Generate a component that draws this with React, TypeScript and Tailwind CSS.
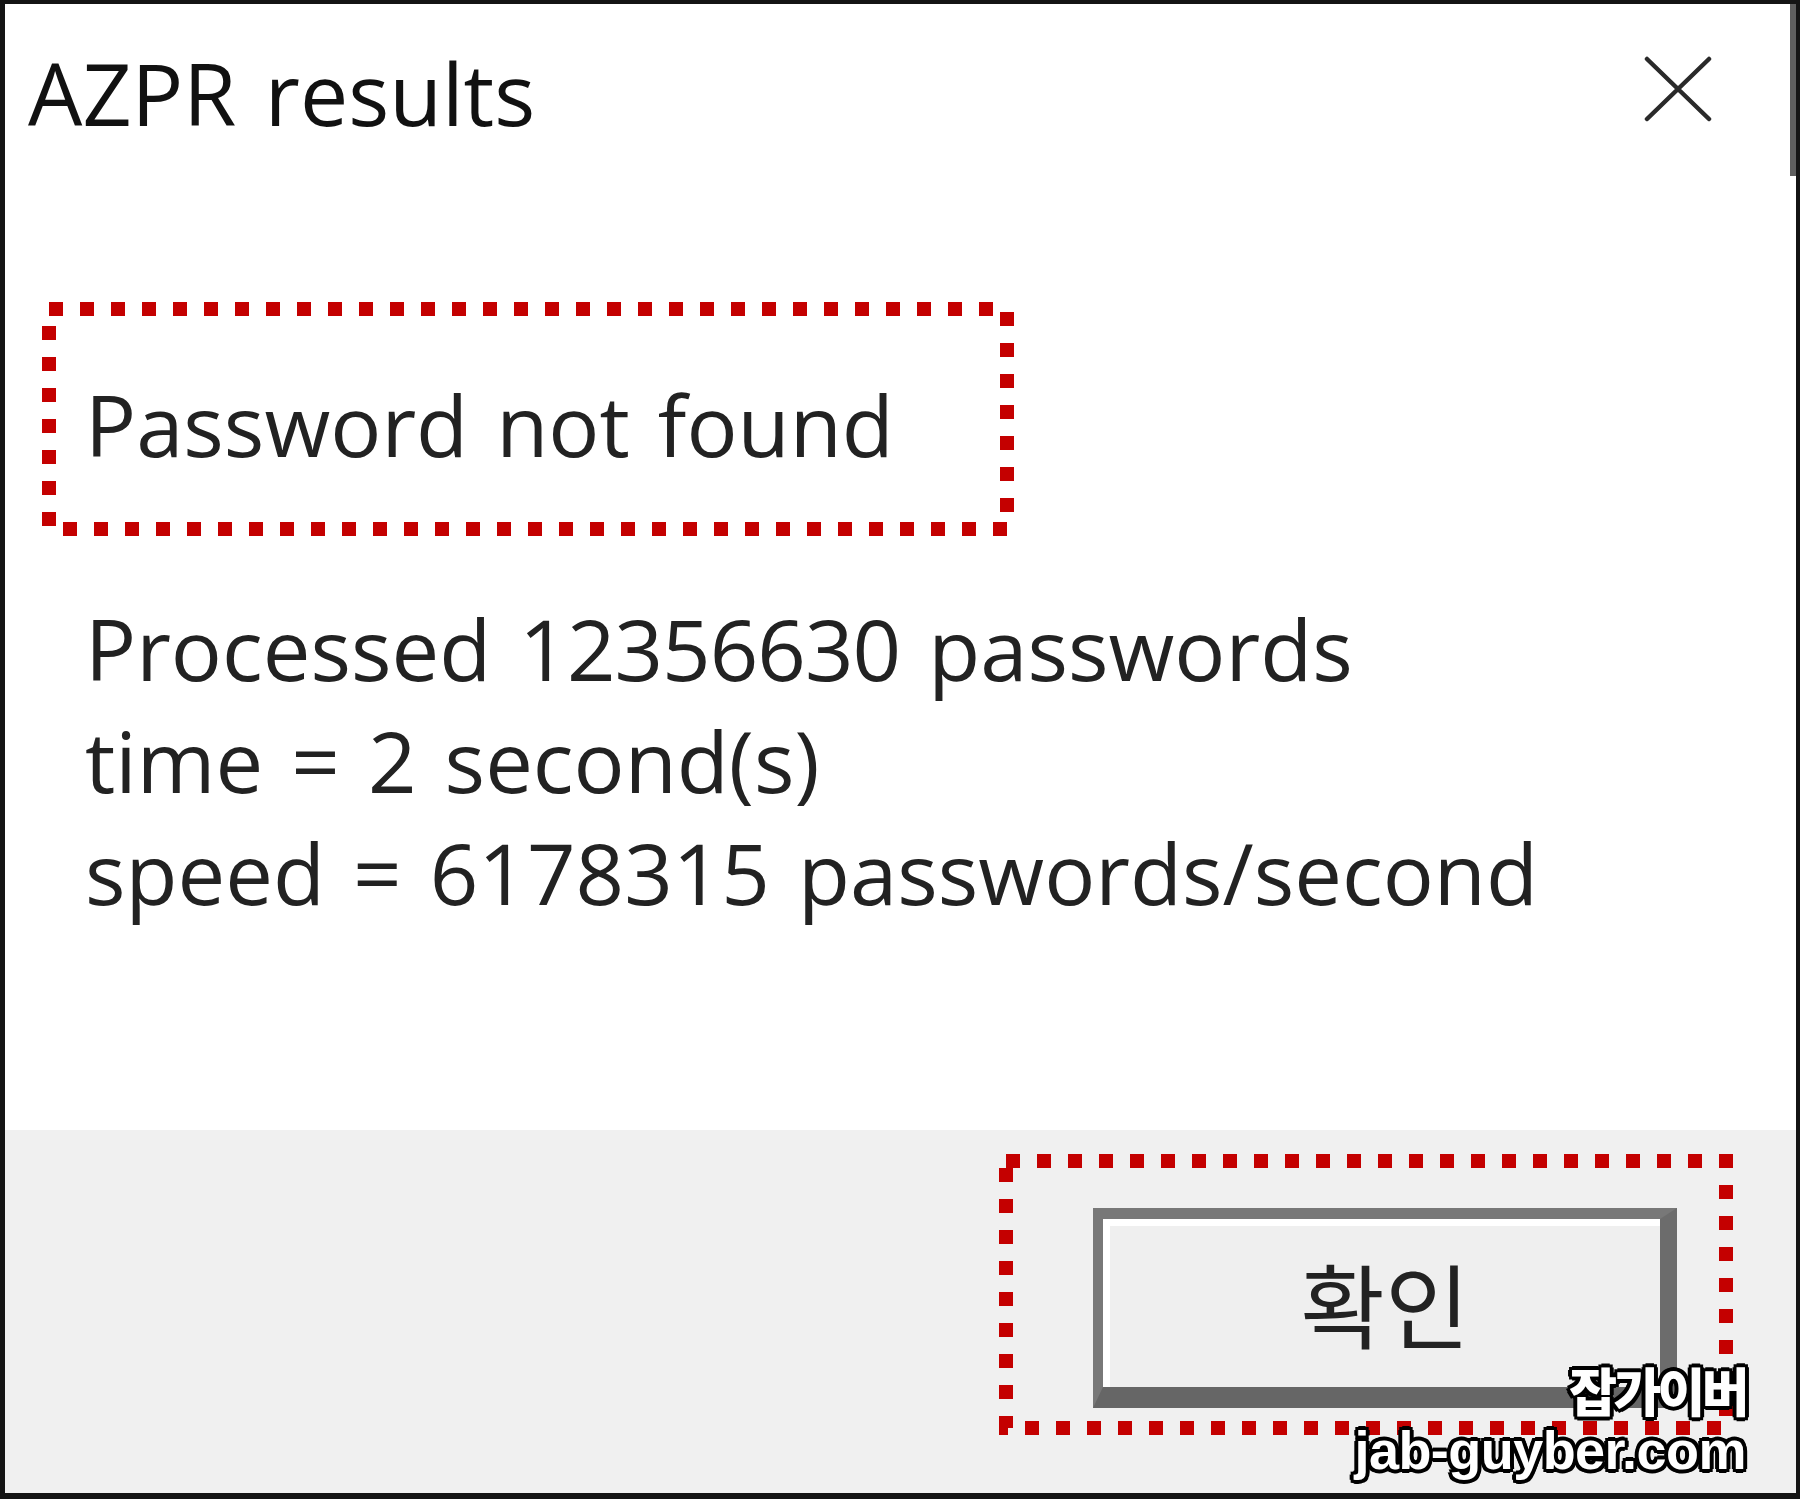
import React from 'react'

const RED = '#c40000'

function DottedFrame({
  width,
  height,
  className,
  children,
}: {
  width: number
  height: number
  className?: string
  children: React.ReactNode
}) {
  return (
    <div className={`relative shrink-0 ${className ?? ''}`} style={{ width, height }}>
      <svg
        aria-hidden="true"
        className="pointer-events-none absolute inset-0"
        width={width}
        height={height}
      >
        <rect
          x={7}
          y={7}
          width={width - 14}
          height={height - 14}
          fill="none"
          stroke={RED}
          strokeWidth={14}
          strokeDasharray="14 17"
        />
      </svg>
      {children}
    </div>
  )
}

const outline =
  '[text-shadow:-3px_-3px_0_#000,3px_-3px_0_#000,-3px_3px_0_#000,3px_3px_0_#000,0_-4px_0_#000,0_4px_0_#000,-4px_0_0_#000,4px_0_0_#000]'

export default function App() {
  return (
    <div className="relative flex h-[1499px] w-[1800px] flex-col overflow-hidden border-t-4 border-r-4 border-b-[6px] border-l-[5px] border-[#141414] bg-white font-['Open_Sans','Noto_Sans',sans-serif] text-[#222] [word-spacing:6px]">
      {/* window edge */}
      <div className="absolute right-0 top-0 h-[172px] w-[6px] bg-[#5e5e5e]" />

      {/* title bar */}
      <div className="flex items-start justify-between pl-[23px] pr-[84px]">
        <h1 className="pt-[33px] text-[86px] leading-[112px] text-[#111]">AZPR results</h1>
        <svg className="mt-[52px]" width="68" height="66" viewBox="0 0 68 66" fill="none">
          <path d="M3 3 L65 63 M65 3 L3 63" stroke="#2a2a2a" strokeWidth="4.5" strokeLinecap="round" />
        </svg>
      </div>

      {/* message */}
      <div className="flex-1 pl-[37px] pt-[153px] text-[85px] leading-[112px]">
        <DottedFrame width={972} height={234} className="pl-[43px] pt-[66px]">
          <p>Password not found</p>
        </DottedFrame>
        <div className="ml-[43px] mt-[56px]">
          <p>
            Processed <span className="tracking-[-1px]">12356630</span> passwords
          </p>
          <p>time = 2 second(s)</p>
          <p>speed = 6178315 passwords/second</p>
        </div>
      </div>

      {/* button bar */}
      <div className="flex h-[363px] justify-end bg-[#f0f0f0] pr-[63px] pt-[24px]">
        <DottedFrame width={734} height={281} className="pl-[94px] pt-[54px]">
          <button className="h-[200px] w-[584px] border-t-[11px] border-r-[17px] border-b-[21px] border-l-[10px] border-t-[#787878] border-r-[#6c6c6c] border-b-[#666] border-l-[#787878] bg-[#efefef]">
            <div className="flex h-full w-full items-center justify-center border-t-[7px] border-l-[7px] border-white pb-[10px]">
              <span className="font-['Noto_Sans_CJK_KR',sans-serif] text-[92px] leading-none text-[#222] [word-spacing:0]">
                확인
              </span>
            </div>
          </button>
        </DottedFrame>
      </div>

      {/* watermark */}
      <div className="absolute bottom-[14px] right-[50px] flex flex-col items-end text-white [word-spacing:0]">
        <span className={`mb-[4px] font-['Noto_Sans_CJK_KR',sans-serif] text-[52px] leading-[54px] font-black tracking-[-0.07em] ${outline}`}>
          잡가이버
        </span>
        <span className={`font-['Liberation_Sans',sans-serif] text-[54px] leading-[58px] font-bold tracking-[-0.01em] ${outline}`}>
          jab-guyber.com
        </span>
      </div>
    </div>
  )
}
